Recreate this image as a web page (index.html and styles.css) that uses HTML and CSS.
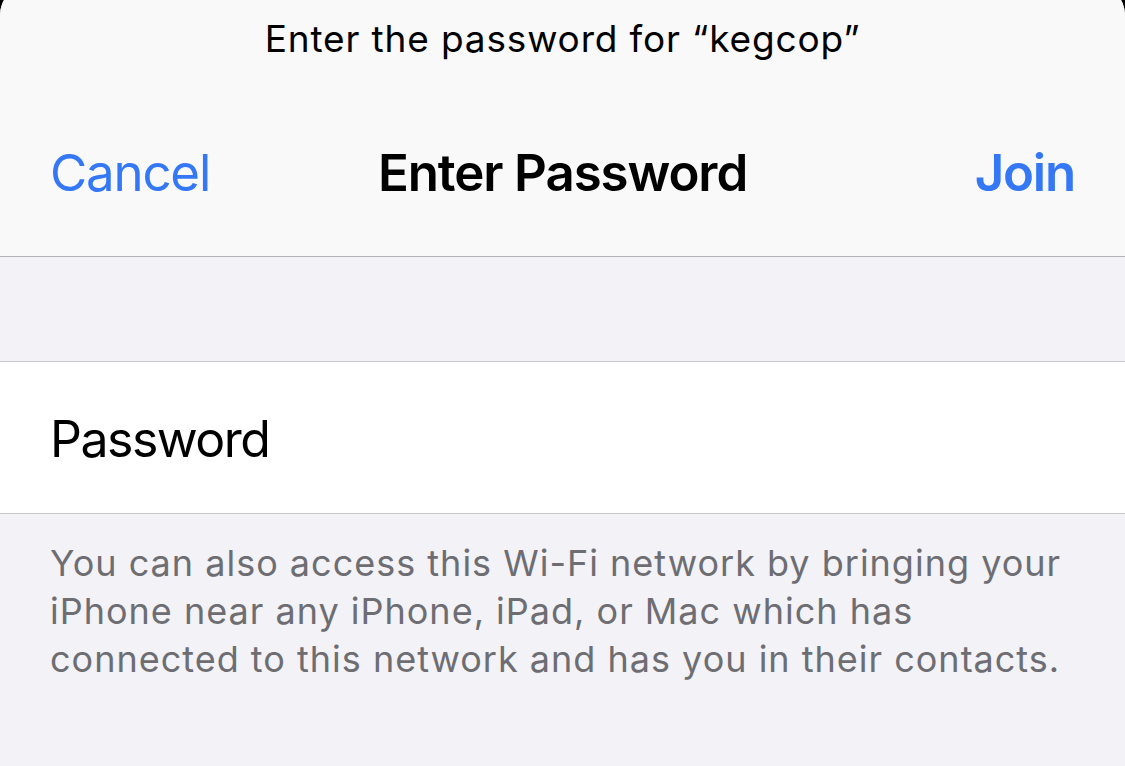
FILE: index.html
```html
<!DOCTYPE html>
<html lang="en">
<head>
<meta charset="utf-8">
<title>Enter Password</title>
<link rel="stylesheet" href="styles.css">
</head>
<body>
<div class="sheet">
  <header class="header">
    <div class="prompt">Enter the password for “kegcop”</div>
    <nav class="navbar">
      <span class="nav-btn cancel">Cancel</span>
      <span class="nav-title">Enter Password</span>
      <span class="nav-btn join">Join</span>
    </nav>
  </header>
  <div class="spacer"></div>
  <div class="row">
    <span class="row-label">Password</span>
  </div>
  <p class="footer-note">You can also access this Wi-Fi network by bringing your iPhone near any iPhone, iPad, or Mac which has connected to this network and has you in their contacts.</p>
</div>
</body>
</html>
```

FILE: styles.css
```css
html, body {
  margin: 0;
  padding: 0;
  background: #000;
  overflow: hidden;
}
body {
  font-family: Inter, "Noto Sans", sans-serif;
  width: 1125px;
  height: 766px;
}
.sheet {
  margin-top: -15px;
  height: 781px;
  background: #f2f2f7;
  border-radius: 30px 30px 0 0;
  overflow: hidden;
  display: flex;
  flex-direction: column;
}
.header {
  background: #f9f9f9;
  height: 271px;
  border-bottom: 1px solid #b4b4b7;
  display: flex;
  flex-direction: column;
}
.prompt {
  margin-top: 31px;
  text-align: center;
  font-size: 37px;
  letter-spacing: 0.85px;
  line-height: 46px;
  color: #000;
}
.navbar {
  display: grid;
  grid-template-columns: 1fr auto 1fr;
  align-items: center;
  padding: 0 50px;
  margin-top: 81px;
  height: 60px;
}
.nav-btn {
  font-size: 51px;
  letter-spacing: -1.2px;
  color: #3478f6;
  line-height: 60px;
}
.cancel {
  justify-self: start;
}
.join {
  justify-self: end;
  font-weight: 600;
}
.nav-title {
  font-size: 51px;
  letter-spacing: -1.1px;
  font-weight: 600;
  color: #000;
  line-height: 60px;
}
.spacer {
  height: 104px;
}
.row {
  background: #fff;
  border-top: 1px solid #c8c7cc;
  border-bottom: 1px solid #c8c7cc;
  height: 151px;
  display: flex;
  align-items: center;
  padding: 0 50px;
}
.row-label {
  font-size: 50px;
  letter-spacing: -1.5px;
  color: #000;
  padding-top: 3px;
}
.footer-note {
  margin: 0;
  padding: 25px 50px 0 50px;
  font-size: 36px;
  letter-spacing: 1px;
  line-height: 48px;
  color: #6d6d72;
}
```
